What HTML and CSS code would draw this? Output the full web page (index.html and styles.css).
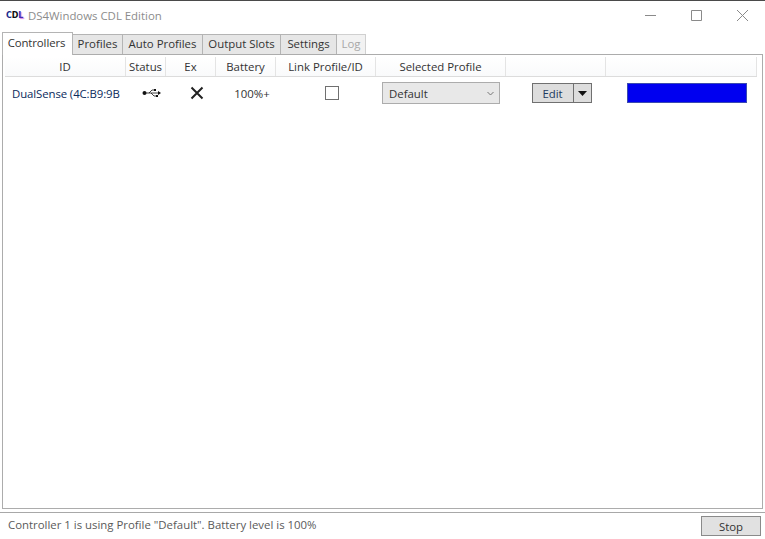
FILE: index.html
```html
<!DOCTYPE html>
<html lang="en">
<head>
<meta charset="utf-8">
<title>DS4Windows CDL Edition</title>
<link rel="stylesheet" href="styles.css">
</head>
<body>
<div class="window">
  <header class="titlebar">
    <div class="brand">
      <span class="logo"><span class="l1">C</span><span class="l2">D</span><span class="l3">L</span></span>
      <span class="title">DS4Windows CDL Edition</span>
    </div>
    <div class="controls">
      <svg class="ctl" width="46" height="12" viewBox="0 0 46 12"><path d="M18 6.500h11" stroke="#8a8a8a" fill="none"/></svg>
      <svg class="ctl" width="46" height="12" viewBox="0 0 46 12"><path d="M18.500 1.500h10v10h-10z" stroke="#8a8a8a" fill="none"/></svg>
      <svg class="ctl" width="46" height="12" viewBox="0 0 46 12"><path d="M18 1l11 11M29 1L18 12" stroke="#8a8a8a" fill="none"/></svg>
    </div>
  </header>
  <nav class="tabs">
    <span class="tab active">Controllers</span>
    <span class="tab">Profiles</span>
    <span class="tab">Auto Profiles</span>
    <span class="tab">Output Slots</span>
    <span class="tab">Settings</span>
    <span class="tab disabled">Log</span>
  </nav>
  <main class="panel">
    <div class="grid header">
      <div class="hcell">ID</div>
      <div class="hcell">Status</div>
      <div class="hcell">Ex</div>
      <div class="hcell">Battery</div>
      <div class="hcell">Link Profile/ID</div>
      <div class="hcell">Selected Profile</div>
      <div class="hcell"></div>
      <div class="hcell"></div>
    </div>
    <div class="grid row">
      <div class="cell id">DualSense (4C:B9:9B</div>
      <div class="cell shift">
        <svg width="20" height="10" viewBox="0 0 20 10">
          <circle cx="2.500" cy="5" r="2" fill="#111"/>
          <path d="M3 5h14M7 5l3-3h3M9 5l3 3h2" stroke="#111" stroke-width=".8" fill="none"/>
          <path d="M16 3l3 2-3 2z" fill="#111"/>
          <rect x="12" y="1" width="2" height="2" fill="#111"/>
          <rect x="14" y="7" width="2" height="2" fill="#111"/>
        </svg>
      </div>
      <div class="cell shift">
        <svg width="14" height="14" viewBox="0 0 14 14"><path d="M1.500 1.500l11 11M12.500 1.500l-11 11" stroke="#222" stroke-width="2" fill="none"/></svg>
      </div>
      <div class="cell shift battery">100%+</div>
      <div class="cell shift"><span class="check"></span></div>
      <div class="cell"><div class="combo"><span>Default</span>
        <svg width="7" height="5" viewBox="0 0 7 5"><path d="M.5 1l3 3 3-3" stroke="#777" fill="none"/></svg></div></div>
      <div class="cell shift-wide"><div class="split"><span class="edit">Edit</span><span class="drop"><svg width="9" height="5" viewBox="0 0 9 5"><path d="M0 0h9L4.500 5z" fill="#111"/></svg></span></div></div>
      <div class="cell shift-wide"><span class="swatch"></span></div>
    </div>
  </main>
  <footer class="status">
    <span class="msg">Controller 1 is using Profile "Default". Battery level is 100%</span>
    <span class="stop">Stop</span>
  </footer>
</div>
</body>
</html>
```

FILE: styles.css
```css
* { box-sizing: border-box; }
html, body { margin: 0; padding: 0; background: #fff; }
body { width: 765px; height: 539px; overflow: hidden; font-family: "Open Sans", "Noto Sans", sans-serif; font-size: 11.4px; color: #333; }
.window { height: 539px; display: flex; flex-direction: column; border-top: 1px solid #4a4a4a; }
.titlebar { height: 30px; display: flex; justify-content: space-between; align-items: center; padding: 0 0 2px 6px; }
.brand { display: flex; align-items: center; gap: 4px; }
.logo { font-family: "DejaVu Sans", sans-serif; font-weight: 700; font-size: 8px; letter-spacing: -.2px; width: 18px; white-space: nowrap; }
.l1 { color: #1a2a8c; } .l2 { color: #111; } .l3 { color: #4a2bb0; text-shadow: 1px 1px 1px #d080e0; }
.title { color: #8c8c8c; }
.controls { display: flex; }
.ctl { display: block; }
.tabs { height: 23px; display: flex; padding-left: 2px; align-items: flex-end; position: relative; }
.tab { height: 20px; line-height: 18px; width: 50px; text-align: center; background: #e6e6e6; border: 1px solid #b4b4b4; border-left-width: 0; border-bottom: 0; white-space: nowrap; }
.tab:nth-child(1) { width: 71px; letter-spacing: -.1px; }
.tab:nth-child(3) { width: 80px; }
.tab:nth-child(4) { width: 78px; }
.tab:nth-child(5) { width: 56px; }
.tab:nth-child(6) { width: 29px; }
.tab.active { height: 23px; line-height: 19px; padding-right: 2px; background: #fff; border-left-width: 1px; position: relative; z-index: 1; margin-bottom: -1px; }
.tab.disabled { background: #f2f2f2; color: #a8a8a8; border-color: #d0d0d0; }
.panel { margin: 0 2px; height: 455px; border: 1px solid #acacac; padding: 2px; background: #fff; }
.grid { display: grid; grid-template-columns: 121px 40px 50px 60px 100px 130px 100px 151px; width: 752px; }
.header { height: 20px; border-bottom: 1px solid #dcdcdc; background: linear-gradient(#fff, #f9fafb); }
.hcell { text-align: center; line-height: 19px; border-right: 1px solid #e4e4e4; }
.row { height: 30px; margin-top: 1px; }
.cell { display: flex; justify-content: center; align-items: center; }
.cell.shift { padding-left: 12px; }
.cell.shift-wide { padding-left: 11px; }
.cell.shift-wide:last-child { padding-left: 10px; }
.cell.id { color: #0a2a5c; justify-content: flex-start; padding-left: 7px; white-space: nowrap; letter-spacing: -.1px; }
.check { width: 14px; height: 14px; border: 1px solid #707070; background: #fff; }
.combo { width: 118px; height: 22px; background: #e8e8e8; border: 1px solid #acacac; display: flex; justify-content: space-between; align-items: center; padding: 0 5px 0 6px; }
.split { display: flex; height: 20px; width: 60px; border: 1px solid #707070; background: #dddddd; }
.edit { flex: 1; text-align: center; color: #1c3a60; line-height: 20px; }
.drop { width: 18px; border-left: 1px solid #707070; display: flex; align-items: center; justify-content: center; }
.swatch { width: 120px; height: 20px; background: #0000f0; border: 1px solid #3a4ab0; }
.status { flex: 1; border-top: 1px solid #a8a8a8; margin-top: 3px; display: flex; justify-content: space-between; align-items: center; padding: 0 4px 3px 8px; }
.msg { color: #5a5a5a; }
.stop { width: 60px; height: 20px; background: #e1e1e1; border: 1px solid #8a8a8a; text-align: center; line-height: 19px; margin-top: 3px; }
```
